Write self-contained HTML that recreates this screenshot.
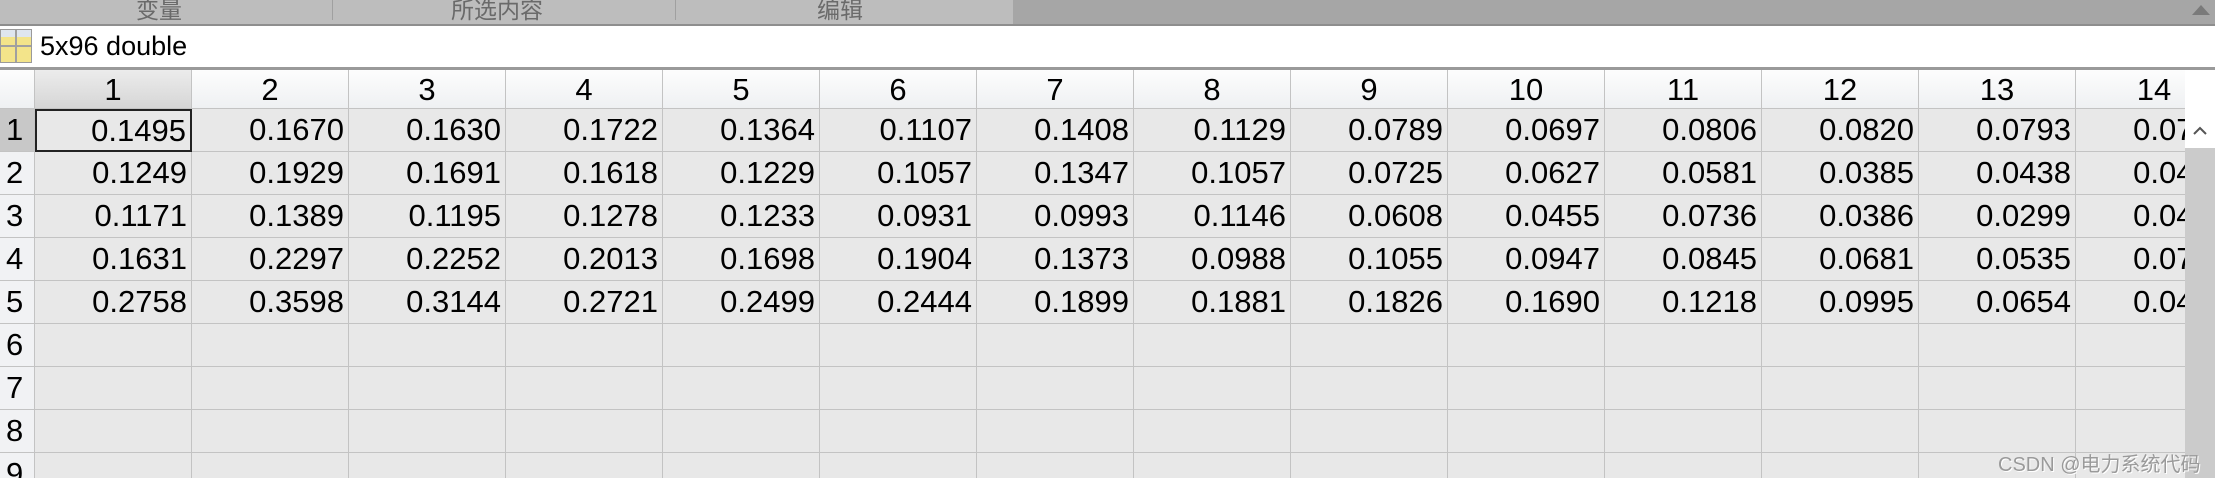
<!DOCTYPE html>
<html><head><meta charset="utf-8"><style>
*{margin:0;padding:0;box-sizing:border-box}
body{width:2215px;height:478px;overflow:hidden;background:#e8e8e8;position:relative;font-family:"Liberation Sans","Noto Sans CJK SC",sans-serif}
#top{position:absolute;left:0;top:0;width:2215px;height:26px;background:#bdbdbd;border-bottom:2px solid #8e8e8e}
#top .dark{position:absolute;left:1013px;top:0;width:1202px;height:24px;background:#a6a6a6}
#top .div{position:absolute;top:0;height:20px;width:1px;background:#a0a0a0}
#top .lb{position:absolute;top:-9px;font-size:23px;color:#6a6a6a;font-family:"Noto Sans CJK SC",sans-serif}
#title{position:absolute;left:0;top:26px;width:2215px;height:44px;background:#fff;border-bottom:3px solid #9a9a9a}
#title .t{position:absolute;left:40px;top:5px;font-size:27px;color:#000}
#grid{position:absolute;left:0;top:70px;width:2185px;height:408px;overflow:hidden}
.r{display:flex;height:43px;width:2233px}
.r.h{height:39px;background:linear-gradient(#fdfdfd,#eef0f2)}
.c{flex:0 0 157px;border-right:1px solid #c3c3c3;border-bottom:1px solid #c3c3c3;font-size:31px;text-align:right;padding-right:4px;line-height:42px;color:#000;background:#e8e8e8}
.h .c{background:transparent;text-align:center;line-height:39px;padding:0}
.h .c.sel{background:linear-gradient(#ececec,#d6d6d6)}
.n{flex:0 0 35px;border-right:1px solid #c3c3c3;border-bottom:1px solid #c3c3c3;background:#f1f2f4;font-size:31px;line-height:42px;padding-left:6px}
.h .n{background:transparent}
.n.sel{background:#c8c8c8}
.c.cur{border:2px solid #222;line-height:40px}
#sb{position:absolute;left:2185px;top:70px;width:30px;height:408px;background:#cbcbcb}
#sb .w{position:absolute;left:0;top:0;width:30px;height:78px;background:#fff}
#wm{position:absolute;left:1998px;top:448px;font-size:20px;color:#9a9a9a;text-shadow:1px 1px 0 #fff}
</style></head><body>
<div id="top"><div class="dark"></div>
<div class="div" style="left:332px"></div><div class="div" style="left:675px"></div>
<div class="lb" style="left:136px">变量</div><div class="lb" style="left:451px">所选内容</div><div class="lb" style="left:817px">编辑</div>
<svg style="position:absolute;left:2190px;top:2px" width="22" height="14"><polygon points="2,13 11,3 20,13" fill="#7a7a7a"/></svg>
</div>
<div id="title">
<svg style="position:absolute;left:0;top:3px" width="33" height="35"><rect x="0.5" y="0.5" width="31" height="33" fill="#f3e48a" stroke="#9a9a9a"/><rect x="1" y="1" width="30" height="7" fill="#dfe6ef"/><line x1="16" y1="1" x2="16" y2="33" stroke="#a0a0a0" stroke-width="2"/><line x1="1" y1="17" x2="31" y2="17" stroke="#a0a0a0" stroke-width="2"/></svg>
<div class="t">5x96 double</div></div>
<div id="grid">
<div class="r h"><div class="n"></div><div class="c sel">1</div><div class="c">2</div><div class="c">3</div><div class="c">4</div><div class="c">5</div><div class="c">6</div><div class="c">7</div><div class="c">8</div><div class="c">9</div><div class="c">10</div><div class="c">11</div><div class="c">12</div><div class="c">13</div><div class="c">14</div></div>
<div class="r"><div class="n sel">1</div><div class="c cur">0.1495</div><div class="c">0.1670</div><div class="c">0.1630</div><div class="c">0.1722</div><div class="c">0.1364</div><div class="c">0.1107</div><div class="c">0.1408</div><div class="c">0.1129</div><div class="c">0.0789</div><div class="c">0.0697</div><div class="c">0.0806</div><div class="c">0.0820</div><div class="c">0.0793</div><div class="c">0.0770</div></div>
<div class="r"><div class="n">2</div><div class="c">0.1249</div><div class="c">0.1929</div><div class="c">0.1691</div><div class="c">0.1618</div><div class="c">0.1229</div><div class="c">0.1057</div><div class="c">0.1347</div><div class="c">0.1057</div><div class="c">0.0725</div><div class="c">0.0627</div><div class="c">0.0581</div><div class="c">0.0385</div><div class="c">0.0438</div><div class="c">0.0440</div></div>
<div class="r"><div class="n">3</div><div class="c">0.1171</div><div class="c">0.1389</div><div class="c">0.1195</div><div class="c">0.1278</div><div class="c">0.1233</div><div class="c">0.0931</div><div class="c">0.0993</div><div class="c">0.1146</div><div class="c">0.0608</div><div class="c">0.0455</div><div class="c">0.0736</div><div class="c">0.0386</div><div class="c">0.0299</div><div class="c">0.0440</div></div>
<div class="r"><div class="n">4</div><div class="c">0.1631</div><div class="c">0.2297</div><div class="c">0.2252</div><div class="c">0.2013</div><div class="c">0.1698</div><div class="c">0.1904</div><div class="c">0.1373</div><div class="c">0.0988</div><div class="c">0.1055</div><div class="c">0.0947</div><div class="c">0.0845</div><div class="c">0.0681</div><div class="c">0.0535</div><div class="c">0.0770</div></div>
<div class="r"><div class="n">5</div><div class="c">0.2758</div><div class="c">0.3598</div><div class="c">0.3144</div><div class="c">0.2721</div><div class="c">0.2499</div><div class="c">0.2444</div><div class="c">0.1899</div><div class="c">0.1881</div><div class="c">0.1826</div><div class="c">0.1690</div><div class="c">0.1218</div><div class="c">0.0995</div><div class="c">0.0654</div><div class="c">0.0440</div></div>
<div class="r"><div class="n">6</div><div class="c"></div><div class="c"></div><div class="c"></div><div class="c"></div><div class="c"></div><div class="c"></div><div class="c"></div><div class="c"></div><div class="c"></div><div class="c"></div><div class="c"></div><div class="c"></div><div class="c"></div><div class="c"></div></div>
<div class="r"><div class="n">7</div><div class="c"></div><div class="c"></div><div class="c"></div><div class="c"></div><div class="c"></div><div class="c"></div><div class="c"></div><div class="c"></div><div class="c"></div><div class="c"></div><div class="c"></div><div class="c"></div><div class="c"></div><div class="c"></div></div>
<div class="r"><div class="n">8</div><div class="c"></div><div class="c"></div><div class="c"></div><div class="c"></div><div class="c"></div><div class="c"></div><div class="c"></div><div class="c"></div><div class="c"></div><div class="c"></div><div class="c"></div><div class="c"></div><div class="c"></div><div class="c"></div></div>
<div class="r"><div class="n">9</div><div class="c"></div><div class="c"></div><div class="c"></div><div class="c"></div><div class="c"></div><div class="c"></div><div class="c"></div><div class="c"></div><div class="c"></div><div class="c"></div><div class="c"></div><div class="c"></div><div class="c"></div><div class="c"></div></div>
</div>
<div id="sb"><div class="w"><svg style="position:absolute;left:7px;top:56px" width="16" height="10"><polyline points="2,8 8,2 14,8" fill="none" stroke="#555" stroke-width="2"/></svg></div></div>
<div id="wm">CSDN @电力系统代码</div>
</body></html>
